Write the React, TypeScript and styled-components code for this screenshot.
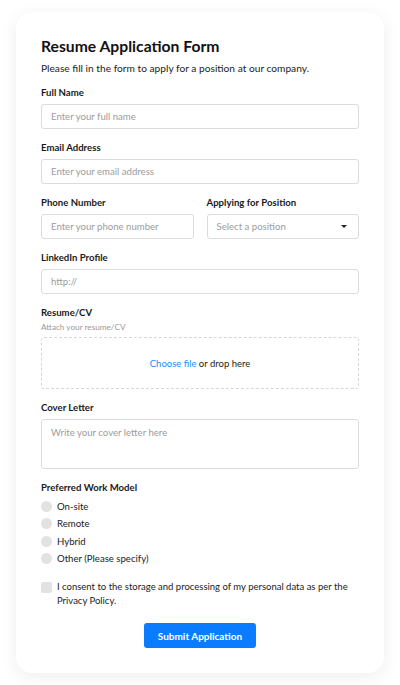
import styled, { createGlobalStyle } from 'styled-components'

const GlobalStyle = createGlobalStyle`
	* {
		box-sizing: border-box;
	}
	body {
		margin: 0;
		background: #ffffff;
		font-family: Lato, 'Noto Sans', sans-serif;
		color: #1c1c1c;
	}
`

/** RESUME FORM */
const App = () => {
	const workModels = ['On-site', 'Remote', 'Hybrid', 'Other (Please specify)']
	return (
		<>
			<GlobalStyle />
			<Page>
				<Card>
					<Title>Resume Application Form</Title>
					<Subtitle>Please fill in the form to apply for a position at our company.</Subtitle>

					<Field>
						<Label>Full Name</Label>
						<Input placeholder='Enter your full name' />
					</Field>

					<Field>
						<Label>Email Address</Label>
						<Input placeholder='Enter your email address' />
					</Field>

					<Row>
						<Field>
							<Label>Phone Number</Label>
							<Input placeholder='Enter your phone number' />
						</Field>
						<Field>
							<Label>Applying for Position</Label>
							<Select>
								<span>Select a position</span>
								<Caret />
							</Select>
						</Field>
					</Row>

					<Field>
						<Label>LinkedIn Profile</Label>
						<Input placeholder='http://' />
					</Field>

					<Field>
						<Label>Resume/CV</Label>
						<Helper>Attach your resume/CV</Helper>
						<DropZone>
							<FileLink>Choose file</FileLink>&nbsp;or drop here
						</DropZone>
					</Field>

					<Field>
						<Label>Cover Letter</Label>
						<TextArea placeholder='Write your cover letter here' />
					</Field>

					<Label>Preferred Work Model</Label>
					<RadioList>
						{workModels.map((model) => (
							<Option key={model}>
								<Radio />
								{model}
							</Option>
						))}
					</RadioList>

					<Consent>
						<Checkbox />
						<span>I consent to the storage and processing of my personal data as per the Privacy Policy.</span>
					</Consent>

					<Actions>
						<SubmitButton type='button'>Submit Application</SubmitButton>
					</Actions>
				</Card>
			</Page>
		</>
	)
}

export default App

const Page = styled.div`
	padding: 12px 16px;
`
const Card = styled.div`
	display: flex;
	flex-direction: column;
	background: #ffffff;
	border-radius: 16px;
	box-shadow: 0 4px 18px rgba(0, 0, 0, 0.07);
	padding: 23px 25px 25px;
`
const Title = styled.h1`
	margin: 0 0 3px;
	font-size: 15.7px;
	line-height: 22px;
	font-weight: 700;
	color: #111;
`
const Subtitle = styled.p`
	margin: 0 0 10px;
	font-size: 10.2px;
	line-height: 16px;
	color: #222;
`
const Field = styled.div`
	display: flex;
	flex-direction: column;
	flex: 1;
	min-width: 0;
	margin-bottom: 12px;
`
const Row = styled.div`
	display: flex;
	gap: 13px;
`
const Label = styled.label`
	font-size: 9.6px;
	line-height: 14px;
	font-weight: 700;
	color: #1a1a1a;
	margin-bottom: 4px;
`
const Helper = styled.span`
	font-size: 8.2px;
	line-height: 12px;
	color: #9a9a9a;
	margin: -3px 0 4px;
`
const inputBase = `
	width: 100%;
	border: 1px solid #dcdcdc;
	border-radius: 3px;
	background: #fff;
	font-family: Lato, 'Noto Sans', sans-serif;
	font-size: 9.6px;
	color: #222;
	outline: none;
	&::placeholder {
		color: #9c9c9c;
	}
`
const Input = styled.input`
	${inputBase}
	height: 25px;
	padding: 0 9px;
`
const Select = styled.div`
	${inputBase}
	height: 25px;
	padding: 0 9px;
	display: flex;
	align-items: center;
	justify-content: space-between;
	color: #9c9c9c;
`
const Caret = styled.span`
	width: 0;
	height: 0;
	margin-right: 2px;
	border-left: 3px solid transparent;
	border-right: 3px solid transparent;
	border-top: 3.5px solid #222;
`
const DropZone = styled.div`
	height: 52px;
	display: flex;
	align-items: center;
	justify-content: center;
	border: 1px dashed #d8d8d8;
	border-radius: 3px;
	font-size: 9.5px;
	color: #222;
`
const FileLink = styled.span`
	color: #1a8cff;
`
const TextArea = styled.textarea`
	${inputBase}
	height: 50px;
	padding: 7px 9px;
	resize: none;
	display: block;
`
const RadioList = styled.div`
	display: flex;
	flex-direction: column;
	margin-top: -1px;
`
const Option = styled.div`
	display: flex;
	align-items: center;
	gap: 5px;
	height: 17.3px;
	font-size: 9.6px;
	color: #222;
`
const Radio = styled.span`
	width: 11px;
	height: 11px;
	border-radius: 50%;
	background: #e2e2e2;
	flex-shrink: 0;
`
const Consent = styled.div`
	display: flex;
	align-items: flex-start;
	gap: 5px;
	margin-top: 13px;
	font-size: 9.5px;
	line-height: 14px;
	color: #222;
`
const Checkbox = styled.span`
	width: 11px;
	height: 11px;
	margin-top: 1.5px;
	border-radius: 2px;
	background: #e2e2e2;
	flex-shrink: 0;
`
const Actions = styled.div`
	display: flex;
	justify-content: center;
	margin-top: 15px;
`
const SubmitButton = styled.button`
	width: 112px;
	height: 25px;
	border: none;
	border-radius: 3px;
	background: #0a7cff;
	color: #fff;
	font-family: Lato, 'Noto Sans', sans-serif;
	font-size: 10px;
	font-weight: 700;
	cursor: pointer;
`
